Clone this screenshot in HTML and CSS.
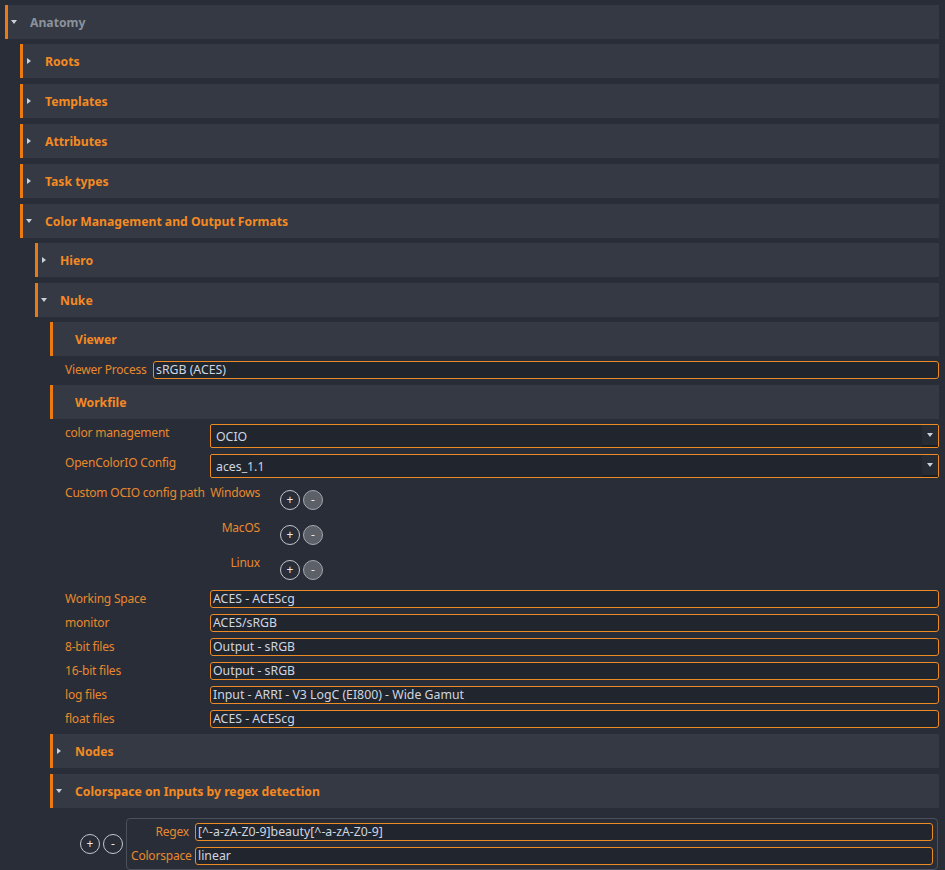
FILE: index.html
```html
<!DOCTYPE html>
<html>
<head>
<meta charset="utf-8">
<link rel="stylesheet" href="styles.css">
</head>
<body>
<div class="page">
  <section class="grp">
    <div class="hdr"><span class="arrow down"></span><span class="title muted">Anatomy</span></div>
    <div class="body">
      <section class="grp"><div class="hdr"><span class="arrow right"></span><span class="title">Roots</span></div></section>
      <section class="grp"><div class="hdr"><span class="arrow right"></span><span class="title">Templates</span></div></section>
      <section class="grp"><div class="hdr"><span class="arrow right"></span><span class="title">Attributes</span></div></section>
      <section class="grp"><div class="hdr"><span class="arrow right"></span><span class="title">Task types</span></div></section>
      <section class="grp">
        <div class="hdr"><span class="arrow down"></span><span class="title">Color Management and Output Formats</span></div>
        <div class="body">
          <section class="grp"><div class="hdr"><span class="arrow right"></span><span class="title">Hiero</span></div></section>
          <section class="grp">
            <div class="hdr"><span class="arrow down"></span><span class="title">Nuke</span></div>
            <div class="body">
              <section class="grp">
                <div class="hdr"><span class="arrow"></span><span class="title">Viewer</span></div>
                <div class="body">
                  <div class="form viewer-form">
                    <div class="lbl">Viewer Process</div>
                    <div class="input">sRGB (ACES)</div>
                  </div>
                </div>
              </section>
              <section class="grp">
                <div class="hdr"><span class="arrow"></span><span class="title">Workfile</span></div>
                <div class="body">
                  <div class="form work-form">
                    <div class="lbl">color management</div>
                    <div class="combo"><span class="txt">OCIO</span><span class="cbox"><span class="arrow down"></span></span></div>
                    <div class="lbl">OpenColorIO Config</div>
                    <div class="combo"><span class="txt">aces_1.1</span><span class="cbox"><span class="arrow down"></span></span></div>
                    <div class="lbl">Custom OCIO config path</div>
                    <div class="sub">
                      <div class="subrow"><div class="sublbl">Windows</div><div class="btns"><span class="cbtn">+</span><span class="cbtn dis">-</span></div></div>
                      <div class="subrow"><div class="sublbl">MacOS</div><div class="btns"><span class="cbtn">+</span><span class="cbtn dis">-</span></div></div>
                      <div class="subrow"><div class="sublbl">Linux</div><div class="btns"><span class="cbtn">+</span><span class="cbtn dis">-</span></div></div>
                    </div>
                    <div class="lbl">Working Space</div>
                    <div class="input">ACES - ACEScg</div>
                    <div class="lbl">monitor</div>
                    <div class="input">ACES/sRGB</div>
                    <div class="lbl">8-bit files</div>
                    <div class="input">Output - sRGB</div>
                    <div class="lbl">16-bit files</div>
                    <div class="input">Output - sRGB</div>
                    <div class="lbl">log files</div>
                    <div class="input">Input - ARRI - V3 LogC (EI800) - Wide Gamut</div>
                    <div class="lbl">float files</div>
                    <div class="input">ACES - ACEScg</div>
                  </div>
                </div>
              </section>
              <section class="grp"><div class="hdr"><span class="arrow right"></span><span class="title">Nodes</span></div></section>
              <section class="grp">
                <div class="hdr"><span class="arrow down"></span><span class="title">Colorspace on Inputs by regex detection</span></div>
                <div class="body list-body">
                  <div class="listrow">
                    <div class="btns"><span class="cbtn">+</span><span class="cbtn">-</span></div>
                    <div class="item">
                      <div class="lbl">Regex</div>
                      <div class="input">[^-a-zA-Z0-9]beauty[^-a-zA-Z0-9]</div>
                      <div class="lbl">Colorspace</div>
                      <div class="input">linear</div>
                    </div>
                  </div>
                </div>
              </section>
            </div>
          </section>
        </div>
      </section>
    </div>
  </section>
</div>
</body>
</html>
```

FILE: styles.css
```css
* { box-sizing: border-box; }
html, body { margin: 0; height: 100%; overflow: hidden; }
body {
  background: #292d37;
  font-family: "Noto Sans", "DejaVu Sans", sans-serif;
  font-size: 12px;
}
.page { padding: 5px 6px 0 5px; }
.grp { display: flex; flex-direction: column; }
.hdr {
  height: 34px;
  display: flex;
  align-items: center;
  background: #343944;
  border-left: 3px solid #ec7a12;
  padding-left: 2px;
  flex: none;
}
.arrow {
  width: 8px;
  height: 8px;
  display: flex;
  align-items: center;
  justify-content: center;
  flex: none;
}
.arrow.right::before {
  content: "";
  border-left: 4px solid #c8d0da;
  border-top: 3.5px solid transparent;
  border-bottom: 3.5px solid transparent;
}
.arrow.down::before {
  content: "";
  border-top: 4px solid #c8d0da;
  border-left: 3.5px solid transparent;
  border-right: 3.5px solid transparent;
}
.title {
  margin-left: 12px;
  font-weight: bold;
  font-size: 12.2px;
  color: #f58a22;
  white-space: nowrap;
}
.title.muted { color: #8b929b; }
.body {
  display: flex;
  flex-direction: column;
  gap: 6px;
  padding: 5px 0 0 15px;
}
.form {
  display: grid;
  row-gap: 6px;
  align-items: start;
}
.viewer-form { grid-template-columns: 88px 1fr; }
.work-form { grid-template-columns: 145px 1fr; }
.lbl {
  color: #e8892e;
  line-height: 18px;
  white-space: nowrap;
  letter-spacing: -0.2px;
}
.input {
  height: 18px;
  background: #21252d;
  border: 1px solid #ec8a24;
  border-radius: 3px;
  color: #cfd6e0;
  font-size: 12.3px;
  line-height: 16px;
  padding: 0 2px;
  white-space: nowrap;
  overflow: hidden;
}
.combo {
  height: 24px;
  display: flex;
  align-items: center;
  background: #21252d;
  border: 1px solid #ec8a24;
  border-radius: 2px;
  color: #cfd6e0;
  font-size: 12.3px;
  padding-left: 5px;
}
.combo .txt { flex: 1; }
.cbox {
  width: 16px;
  height: 100%;
  background: #272b34;
  border-bottom: 2px solid #1b1e24;
  display: flex;
  align-items: center;
  justify-content: center;
}
.sub { display: flex; flex-direction: column; gap: 5px; }
.subrow { display: flex; height: 30px; align-items: flex-start; }
.sublbl {
  width: 50px;
  text-align: right;
  line-height: 18px;
  color: #e8892e;
  white-space: nowrap;
  letter-spacing: -0.2px;
}
.subrow .btns { margin-left: 20px; margin-top: 6px; }
.btns { display: flex; gap: 3px; }
.cbtn {
  width: 20px;
  height: 20px;
  border-radius: 50%;
  border: 1px solid #c4c8ce;
  display: flex;
  align-items: center;
  justify-content: center;
  color: #e6eaf0;
  font-size: 12px;
  line-height: 1;
}
.cbtn.dis { background: #5c6069; border-color: #a4a8ae; }
.list-body { padding-top: 10px; }
.listrow { display: flex; align-items: center; padding-left: 15px; }
.item {
  margin-left: 3px;
  margin-right: 1px;
  flex: 1;
  border: 1px solid #4b505a;
  border-radius: 4px;
  padding: 4px;
  display: grid;
  grid-template-columns: 58px 1fr;
  column-gap: 6px;
  row-gap: 6px;
}
.item .lbl { text-align: right; }
```
